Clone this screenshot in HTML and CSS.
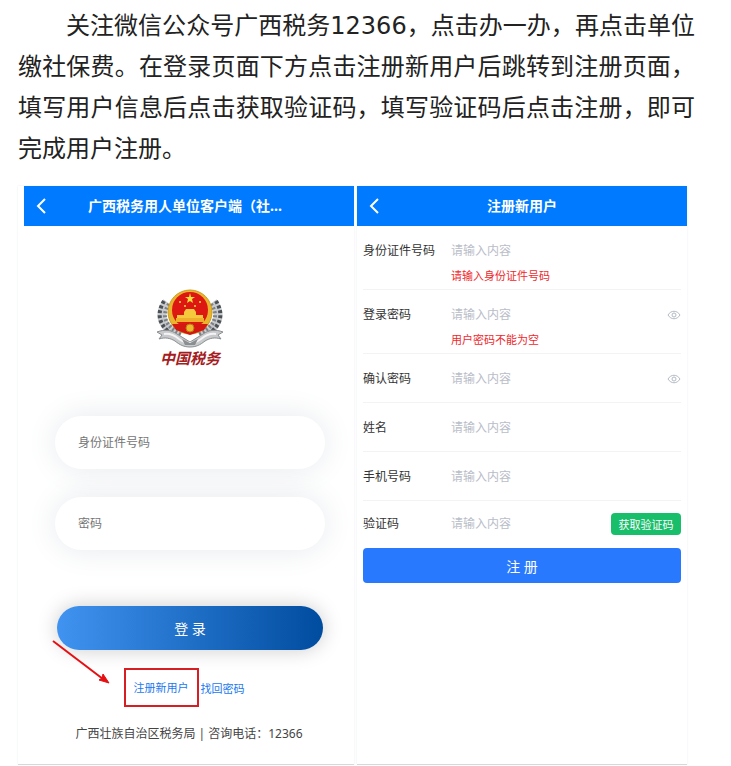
FILE: index.html
```html
<!DOCTYPE html>
<html lang="zh-CN">
    <head>
        <meta charset="UTF-8">
        <meta name="viewport" content="width=device-width, initial-scale=1">
        <title>新用户注册</title>
        <link rel="stylesheet" href="styles.css">
    </head>
    <body>
        <p class="intro">关注微信公众号广西税务12366，点击办一办，再点击单位缴社保费。在登录页面下方点击注册新用户后跳转到注册页面，填写用户信息后点击获取验证码，填写验证码后点击注册，即可完成用户注册。</p>
        <div class="screens">
            <!-- 登录页面 -->
            <div class="panel login">
                <div class="bar">
                    <button type="button" class="back" aria-label="返回"><svg width="10" height="16" viewBox="0 0 10 16"><path d="M9 1L2 8l7 7"/></svg></button>
                    <h2>广西税务用人单位客户端（社...</h2>
                </div>
                <form class="login-form">
                    <div class="logo">
                        <svg width="68" height="60" viewBox="0 0 68 60">
                            <!-- 麦穗 -->
                            <g fill="none" stroke="#c9ccce" stroke-width="9">
                                <path d="M11 14C1 27 6 40 24 48"/>
                                <path d="M57 14c10 13 5 26-13 34"/>
                            </g>
                            <g fill="none" stroke="#4c5155" stroke-width="4" stroke-dasharray="3 2">
                                <path d="M8 13C-1 28 4 41 23 50"/>
                                <path d="M60 13c9 15 4 28-15 37"/>
                            </g>
                            <g fill="none" stroke="#7d8286" stroke-width="4" stroke-dasharray="2 2">
                                <path d="M13 16C5 28 9 38 25 46"/>
                                <path d="M55 16c8 12 4 22-12 30"/>
                            </g>
                            <!-- 飘带 -->
                            <path d="M1 44c8-3 14-2 20 2l13 8 13-8c6-4 12-5 20-2l-5 3 3 4c-6-2-11-1-16 2-5 4-9 6-15 6s-10-2-15-6c-5-3-10-4-16-2l3-4z" fill="#c8cacc" stroke="#8b8f92"/>
                            <path d="M8 46c6-1 10 1 15 5 4 3 7 4 11 4s7-1 11-4c5-4 9-6 15-5" fill="none" stroke="#f4f4f5" stroke-width="2"/>
                            <path d="M26 51l8 4 8-4-3 6H29z" fill="#8a8e91"/>
                            <!-- 国徽 -->
                            <circle cx="34" cy="24" r="22" fill="#e8b52c" stroke="#cf9a22"/>
                            <circle cx="34" cy="22" r="18" fill="#dd1712"/>
                            <path d="M34 5l1 4h4l-3 2 1 4-3-2-3 2 1-4-3-2h4z" fill="#ffdf38"/>
                            <g fill="#ffdf38">
                                <circle cx="24" cy="14" r="1"/>
                                <circle cx="44" cy="14" r="1"/>
                                <circle cx="29" cy="18" r="1"/>
                                <circle cx="39" cy="18" r="1"/>
                            </g>
                            <path d="M28 24l2-3h8l2 3v3h7v3H21v-3h7z" fill="#f6c93c"/>
                            <path d="M20 30h28v4H20z" fill="#efae2c"/>
                            <path d="M16 36h36l-4 6-14 5-14-5z" fill="#d31812"/>
                            <circle cx="34" cy="40" r="4" fill="#f0b92d" stroke="#b87a12"/>
                        </svg>
                        <span>中国税务</span>
                    </div>
                    <input class="pill" type="text" placeholder="身份证件号码" aria-label="身份证件号码">
                    <input class="pill" type="password" placeholder="密码" aria-label="密码">
                    <button type="button" class="login-btn">登 录</button>
                    <div class="links">
                        <a href="#" class="marked">注册新用户</a>
                        <a href="#">找回密码</a>
                        <!-- 指向注册的箭头 -->
                        <svg class="arrow" width="60" height="48" viewBox="0 0 60 48"><path d="M1 1L51 39" stroke="#e60f12" stroke-width="2"/><path d="M57 43l-10-3 3-2 1-4z" fill="#e60f12" stroke="#e60f12"/></svg>
                    </div>
                </form>
                <p class="foot">广西壮族自治区税务局 | 咨询电话：12366</p>
            </div>
            <!-- 注册页面 -->
            <div class="panel register">
                <div class="bar">
                    <button type="button" class="back" aria-label="返回"><svg width="10" height="16" viewBox="0 0 10 16"><path d="M9 1L2 8l7 7"/></svg></button>
                    <h2>注册新用户</h2>
                </div>
                <form class="reg-form">
                    <div class="row has-error">
                        <label for="idno">身份证件号码</label>
                        <input id="idno" type="text" placeholder="请输入内容">
                        <p class="error">请输入身份证件号码</p>
                    </div>
                    <div class="row has-error">
                        <label for="pwd">登录密码</label>
                        <input id="pwd" type="password" placeholder="请输入内容">
                        <button type="button" class="eye" aria-label="显示密码"><svg width="14" height="10" viewBox="0 0 14 10"><path d="M1 5c3-5 9-5 12 0-3 5-9 5-12 0z"/><circle cx="7" cy="5" r="2"/></svg></button>
                        <p class="error">用户密码不能为空</p>
                    </div>
                    <div class="row">
                        <label for="pwd2">确认密码</label>
                        <input id="pwd2" type="password" placeholder="请输入内容">
                        <button type="button" class="eye" aria-label="显示密码"><svg width="14" height="10" viewBox="0 0 14 10"><path d="M1 5c3-5 9-5 12 0-3 5-9 5-12 0z"/><circle cx="7" cy="5" r="2"/></svg></button>
                    </div>
                    <div class="row">
                        <label for="name">姓名</label>
                        <input id="name" type="text" placeholder="请输入内容">
                    </div>
                    <div class="row">
                        <label for="phone">手机号码</label>
                        <input id="phone" type="tel" placeholder="请输入内容">
                    </div>
                    <div class="row last">
                        <label for="code">验证码</label>
                        <input id="code" type="text" placeholder="请输入内容">
                        <button type="button" class="code-btn">获取验证码</button>
                    </div>
                    <button type="button" class="reg-btn">注 册</button>
                </form>
            </div>
        </div>
    </body>
</html>
```

FILE: styles.css
```css
*{
    box-sizing: border-box;
}
body{
    margin: 0;
    background: #fff;
    color: #333;
    font-family: "Noto Sans", "Noto Sans CJK SC", sans-serif;
    font-size: 12px;
}
h2, p{
    margin: 0;
}
input, button{
    font-family: inherit;
    font-size: 12px;
    border: 0;
    padding: 0;
    margin: 0;
    background: none;
}
button{
    cursor: pointer;
}
input{
    min-width: 0;
    outline: none;
}
a{
    color: #1a78f0;
    text-decoration: none;
}
.intro{
    padding: 6px 36px 0 18px;
    font-family: "DejaVu Sans", "Noto Sans CJK SC", sans-serif;
    font-size: 24px;
    line-height: 41px;
    text-indent: 2em;
    text-align: justify;
    text-spacing-trim: space-all;
    color: #222;
}
.screens{
    display: grid;
    grid-template-columns: 336fr 330fr;
    gap: 3px;
    margin: 16px 44px 0 18px;
}
.panel{
    border-bottom: 1px solid #d8d8d8;
    box-shadow: 0 0 2px #e8ebee;
}
.login{
    padding-left: 6px;
    padding-bottom: 20px;
}
/* 顶部标题栏 */
.bar{
    display: grid;
    grid-template-columns: 34px 1fr 34px;
    align-items: center;
    height: 40px;
    background: #007aff;
    color: #fff;
}
.login .bar{
    grid-template-columns: 34px 1fr 42px;
}
.bar h2{
    font-size: 14px;
    line-height: 20px;
    text-align: center;
    white-space: nowrap;
}
.back{
    height: 16px;
}
.back svg{
    display: block;
    margin: 0 auto;
    fill: none;
    stroke: #fff;
    stroke-width: 2;
}
/* 登录 */
.login-form{
    display: flex;
    flex-direction: column;
    padding: 62px 29px 0 31px;
}
.logo{
    display: flex;
    flex-direction: column;
    align-items: center;
    margin-bottom: 48px;
}
.logo span{
    font-size: 15px;
    line-height: 20px;
    font-weight: bold;
    font-style: italic;
    color: #a51c22;
}
.pill{
    height: 53px;
    margin-bottom: 28px;
    padding: 0 23px;
    border-radius: 27px;
    background: #fff;
    box-shadow: 0 0 32px #e6e9ec;
}
.pill::placeholder{
    color: #757575;
}
.login-btn{
    height: 44px;
    margin: 28px 2px 18px;
    border-radius: 22px;
    background: linear-gradient(to right, #4093f0, #004c9f);
    box-shadow: 0 0 20px #ccc;
    color: #fff;
    font-size: 14px;
}
.links{
    position: relative;
    display: flex;
    align-items: center;
    justify-content: center;
    gap: 2px;
    padding-right: 12px;
    font-size: 11px;
}
.marked{
    padding: 9px 8px;
    border: 2px solid #d81e22;
    line-height: 17px;
}
.arrow{
    position: absolute;
    left: -3px;
    top: -28px;
    fill: none;
}
.foot{
    margin-top: 17px;
    line-height: 20px;
    text-align: center;
    color: #444;
}
/* 注册 */
.reg-form{
    padding: 0 6px;
}
.row{
    display: grid;
    grid-template-columns: 88px 1fr auto;
    align-items: center;
    padding: 15px 0 13px;
    border-bottom: 1px solid #f2f3f5;
}
.row label, .row input{
    height: 20px;
    line-height: 20px;
}
.row input::placeholder{
    color: #b9bdc8;
}
.has-error{
    padding-bottom: 5px;
}
.error{
    grid-column: 2 / 4;
    margin-top: 7px;
    font-size: 11px;
    line-height: 16px;
    color: #f0282d;
}
.eye{
    height: 10px;
}
.eye svg{
    display: block;
    fill: none;
    stroke: #b4b9c6;
}
.last{
    padding: 12px 0 13px;
    border: 0;
}
.code-btn{
    width: 70px;
    height: 22px;
    border-radius: 4px;
    background: #19be6b;
    color: #fff;
    font-size: 11px;
}
.reg-btn{
    width: 100%;
    height: 35px;
    border-radius: 4px;
    background: #2979ff;
    color: #fff;
    font-size: 14px;
}
```
